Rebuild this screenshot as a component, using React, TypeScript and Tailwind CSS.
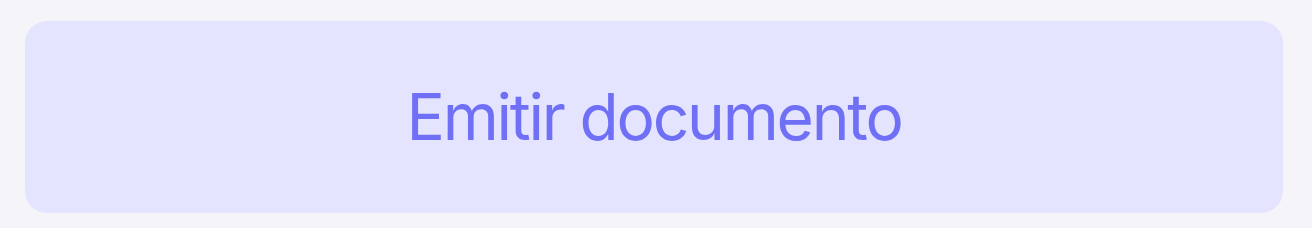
import React from "react";

export default function App() {
  return (
    <div className="w-[1312px] h-[228px] bg-[#f4f4f9] pt-[21px] pl-[25px] pr-[29px] pb-[15px]">
      <button
        className="w-full h-[192px] rounded-[22px] bg-[#e4e4fe] flex items-center justify-center text-[#7070f6] text-[64px] leading-none tracking-[-2.2px]"
        style={{ fontFamily: "Inter, 'Liberation Sans', sans-serif" }}
      >
        Emitir documento
      </button>
    </div>
  );
}
